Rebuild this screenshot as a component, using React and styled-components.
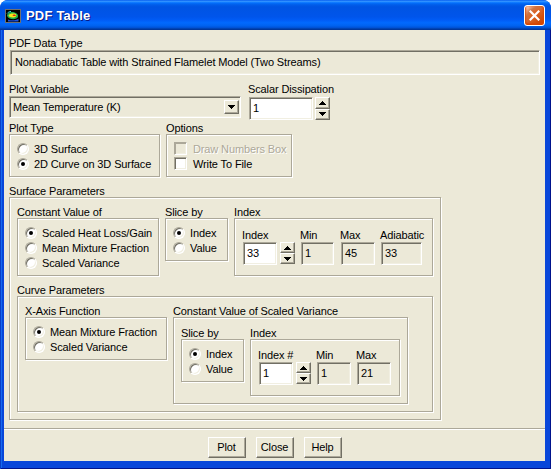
import React from 'react';
import styled, { createGlobalStyle } from 'styled-components';

const FACE = '#ECE9D8';
const SHADOW = '#ACA899';
const DARK = '#716F64';
const LIGHT = '#F1EFE2';

const GlobalStyle = createGlobalStyle`
  html, body { margin: 0; padding: 0; background: #fff; }
  * { box-sizing: border-box; }
`;

const Window = styled.div`
  width: 551px;
  height: 469px;
  display: flex;
  flex-direction: column;
  border-radius: 8px 8px 0 0;
  overflow: hidden;
  background: #0846DA;
  font-family: 'Liberation Sans', Arial, sans-serif;
  font-size: 11px;
  letter-spacing: -0.12px;
  color: #000;
`;

const TitleBar = styled.div`
  flex: none;
  height: 30px;
  display: flex;
  align-items: center;
  padding: 1px 6px 0 5px;
  background: linear-gradient(
    to bottom,
    #0058EE 0%, #3593FF 4%, #288EFF 6%, #127DFF 8%, #036FFC 10%,
    #0262EE 14%, #0057E5 20%, #0054E3 24%, #0055EB 56%, #005BF5 66%,
    #026AFE 76%, #0062EF 86%, #0052D6 92%, #0040AB 96%, #003092 100%
  );
`;

const Title = styled.span`
  flex: 1;
  margin-left: 5px;
  color: #fff;
  font-weight: bold;
  font-size: 13px;
  letter-spacing: 0.2px;
  text-shadow: 1px 1px 0 #0A1883;
`;

const CloseButton = styled.div`
  width: 21px;
  height: 21px;
  border: 1px solid #fff;
  border-radius: 3px;
  background: radial-gradient(circle at 90% 90%, #cc4600 0%, #dc6527 55%, #cd7546 70%, #ffccb2 90%, #fff 100%);
  box-shadow: inset 0 -1px 2px 1px #da4600;
  display: flex;
  align-items: center;
  justify-content: center;
`;

const Frame = styled.div`
  flex: 1;
  display: flex;
  padding: 0 6px 8px 4px;
  background: #0846DA;
  box-shadow: inset 1px 0 0 #0A3FC8, inset -1px -1px 0 #00138C, inset 2px 0 0 #166AEE;
`;

const Client = styled.div`
  flex: 1;
  display: flex;
  flex-direction: column;
  padding: 7px 5px 0 5px;
  background: ${FACE};
`;

const Row = styled.div`
  display: flex;
  align-items: flex-start;
  margin-top: ${p => p.$mt || 0}px;
  margin-left: ${p => p.$ml || 0}px;
`;

const Col = styled.div`
  flex: none;
  display: flex;
  flex-direction: column;
  align-items: flex-start;
  margin-left: ${p => p.$ml || 0}px;
  margin-top: ${p => p.$mt || 0}px;
  width: ${p => (p.$w ? `${p.$w}px` : 'auto')};
`;

const Caption = styled.div`
  height: 12px;
  line-height: 12px;
  white-space: nowrap;
`;

const Etched = styled.div`
  width: ${p => p.$w}px;
  padding: ${p => p.$pad};
  display: flex;
  flex-direction: ${p => (p.$row ? 'row' : 'column')};
  align-items: flex-start;
  border: 1px solid ${SHADOW};
  box-shadow: inset 1px 1px 0 #fff, 1px 1px 0 #fff;
`;

const Field = styled.div`
  flex: none;
  align-self: stretch;
  width: ${p => (p.$w ? `${p.$w}px` : 'auto')};
  height: ${p => p.$h}px;
  margin-left: ${p => p.$ml || 0}px;
  margin-top: ${p => p.$mt || 0}px;
  padding: 0 0 1px ${p => p.$pl ?? 3}px;
  display: flex;
  align-items: center;
  white-space: nowrap;
  overflow: hidden;
  background: ${p => (p.$edit ? '#fff' : FACE)};
  border: 1px solid;
  border-color: ${SHADOW} #fff #fff ${SHADOW};
  box-shadow: inset 1px 1px 0 ${DARK}, inset -1px -1px 0 ${LIGHT};
`;

const Raised = `
  background: ${FACE};
  border: 1px solid;
  border-color: #fff ${DARK} ${DARK} #fff;
  box-shadow: inset -1px -1px 0 ${SHADOW};
  display: flex;
  align-items: center;
  justify-content: center;
`;

const Spinner = styled.div`
  flex: none;
  display: flex;
  flex-direction: column;
  width: 15px;
  height: ${p => p.$h}px;
  margin-left: ${p => p.$ml || 0}px;
`;

const SpinButton = styled.div`
  flex: 1;
  ${Raised}
`;

const Select = styled.div`
  width: 232px;
  height: 22px;
  margin-top: 1px;
  padding: 0 1px 1px 3px;
  display: flex;
  align-items: center;
  background: ${FACE};
  border: 1px solid;
  border-color: ${SHADOW} #fff #fff ${SHADOW};
  box-shadow: inset 1px 1px 0 ${DARK}, inset -1px -1px 0 ${LIGHT};
`;

const SelectText = styled.span`
  flex: 1;
  white-space: nowrap;
`;

const SelectButton = styled.div`
  width: 15px;
  height: 14px;
  ${Raised}
`;

const Option = styled.div`
  display: flex;
  align-items: center;
  height: 15px;
  white-space: nowrap;
  color: ${p => (p.$disabled ? SHADOW : '#000')};
  text-shadow: ${p => (p.$disabled ? '1px 1px 0 #fff' : 'none')};
`;

const RadioMark = styled.span`
  position: relative;
  flex: none;
  width: 12px;
  height: 12px;
  margin-right: 5px;
  border-radius: 50%;
  background: #fff;
  border: 1px solid;
  border-color: ${SHADOW} #fff #fff ${SHADOW};
  box-shadow: inset 1px 1px 0 ${DARK}, inset -1px -1px 0 ${LIGHT};

  &::after {
    content: '';
    display: ${p => (p.$on ? 'block' : 'none')};
    position: absolute;
    left: 3px;
    top: 3px;
    width: 4px;
    height: 4px;
    border-radius: 50%;
    background: #000;
  }
`;

const CheckMark = styled.span`
  flex: none;
  width: 13px;
  height: 13px;
  margin-right: 6px;
  background: ${p => (p.$disabled ? FACE : '#fff')};
  border: 1px solid;
  border-color: ${SHADOW} #fff #fff ${SHADOW};
  box-shadow: inset 1px 1px 0 ${p => (p.$disabled ? SHADOW : DARK)}, inset -1px -1px 0 ${LIGHT};
`;

const Separator = styled.div`
  margin: 8px -5px 0;
  border-top: 1px solid ${SHADOW};
  border-bottom: 1px solid #fff;
`;

const ButtonBar = styled.div`
  display: flex;
  justify-content: center;
  gap: 10px;
  margin-top: 7px;
`;

const PushButton = styled.div`
  width: 38px;
  height: 21px;
  padding-bottom: 1px;
  ${Raised}
`;

const UpArrow = () => (
  <svg width="7" height="4" viewBox="0 0 7 4">
    <path d="M3 0h1v1h1v1h1v1h1v1H0V3h1V2h1V1h1z" fill="#000" />
  </svg>
);

const DownArrow = () => (
  <svg width="7" height="4" viewBox="0 0 7 4">
    <path d="M0 0h7v1H6v1H5v1H4v1H3V3H2V2H1V1H0z" fill="#000" />
  </svg>
);

const AppIcon = () => (
  <svg width="16" height="16" viewBox="0 0 16 16">
    <rect x="0.5" y="1.5" width="15" height="13" fill="#000" stroke="#707070" />
    <path d="M2 8C2 4.5 6 3.5 9 4.2C12.5 5 14 7.5 12.5 9.8C10.5 12 4 11.8 2 8Z" fill="#22B14C" />
    <path d="M3.5 7.5C4.5 5.5 8.5 5 10.8 6C12 6.8 11.5 8.8 9.5 9.2C7 9.8 3.8 9.2 3.5 7.5Z" fill="#F5E51B" />
    <path d="M7.5 7.2C8.3 6.2 10.3 6.3 10.8 7.2C11 8.2 8.8 8.6 7.5 7.2Z" fill="#E2231A" />
    <path d="M3 11.5C6 12.8 10.5 12.6 13.5 10.8V13.5H3Z" fill="#1A4FE0" />
    <path d="M2 5.5C3 4.2 4.5 3.6 6 3.4" stroke="#2BD6E8" strokeWidth="1" fill="none" />
  </svg>
);

const CloseGlyph = () => (
  <svg width="11" height="11" viewBox="0 0 11 11">
    <path d="M1.5 1.5L9.5 9.5M9.5 1.5L1.5 9.5" stroke="#fff" strokeWidth="2.2" strokeLinecap="square" />
  </svg>
);

const Group = ({ label, ml, mt, w, pad, row, children }) => (
  <Col $ml={ml} $mt={mt}>
    <Caption>{label}</Caption>
    <Etched $w={w} $pad={pad} $row={row}>
      {children}
    </Etched>
  </Col>
);

const Radio = ({ on, children }) => (
  <Option>
    <RadioMark $on={on} />
    {children}
  </Option>
);

const Check = ({ disabled, children }) => (
  <Option $disabled={disabled}>
    <CheckMark $disabled={disabled} />
    {children}
  </Option>
);

const Spin = ({ h, ml }) => (
  <Spinner $h={h} $ml={ml}>
    <SpinButton><UpArrow /></SpinButton>
    <SpinButton><DownArrow /></SpinButton>
  </Spinner>
);

const ReadOut = ({ label, ml, w, value }) => (
  <Col $ml={ml}>
    <Caption>{label}</Caption>
    <Field $mt={1} $ml={1} $w={w} $h={23}>{value}</Field>
  </Col>
);

const IndexInput = ({ label, value, w }) => (
  <Col>
    <Caption>{label}</Caption>
    <Row $mt={1} $ml={1}>
      <Field $edit $w={w} $h={23}>{value}</Field>
      <Spin h={22} ml={3} />
    </Row>
  </Col>
);

const OPTION_PAD = '6px 7px 5px 7px';

export default function App() {
  return (
    <>
      <GlobalStyle />
      <Window>
        <TitleBar>
          <AppIcon />
          <Title>PDF Table</Title>
          <CloseButton><CloseGlyph /></CloseButton>
        </TitleBar>

        <Frame>
          <Client>
            <Caption>PDF Data Type</Caption>
            <Field $mt={1} $ml={1} $h={25} $pl={4}>
              Nonadiabatic Table with Strained Flamelet Model (Two Streams)
            </Field>

            <Row $mt={8}>
              <Col $w={232}>
                <Caption>Plot Variable</Caption>
                <Select>
                  <SelectText>Mean Temperature (K)</SelectText>
                  <SelectButton><DownArrow /></SelectButton>
                </Select>
              </Col>
              <Col $ml={7}>
                <Caption>Scalar Dissipation</Caption>
                <Row $mt={2} $ml={1}>
                  <Field $edit $w={64} $h={23}>1</Field>
                  <Spin h={23} ml={2} />
                </Row>
              </Col>
            </Row>

            <Row $mt={2}>
              <Group label="Plot Type" w={151} pad={OPTION_PAD}>
                <Radio>3D Surface</Radio>
                <Radio on>2D Curve on 3D Surface</Radio>
              </Group>
              <Group label="Options" ml={6} w={126} pad={OPTION_PAD}>
                <Check disabled>Draw Numbers Box</Check>
                <Check>Write To File</Check>
              </Group>
            </Row>

            <Row $mt={8}>
              <Group label="Surface Parameters" w={432} pad="8px 7px 7px 7px">
                <Row>
                  <Group label="Constant Value of" w={142} pad={OPTION_PAD}>
                    <Radio on>Scaled Heat Loss/Gain</Radio>
                    <Radio>Mean Mixture Fraction</Radio>
                    <Radio>Scaled Variance</Radio>
                  </Group>
                  <Group label="Slice by" ml={6} w={63} pad={OPTION_PAD}>
                    <Radio on>Index</Radio>
                    <Radio>Value</Radio>
                  </Group>
                  <Group label="Index" ml={6} w={199} pad="10px 7px 10px 7px" row>
                    <IndexInput label="Index" value="33" w={34} />
                    <ReadOut label="Min" ml={5} w={33} value="1" />
                    <ReadOut label="Max" ml={6} w={34} value="45" />
                    <ReadOut label="Adiabatic" ml={5} w={41} value="33" />
                  </Group>
                </Row>

                <Group label="Curve Parameters" mt={8} w={416} pad="8px 7px 7px 7px" row>
                  <Group label="X-Axis Function" w={142} pad={OPTION_PAD}>
                    <Radio on>Mean Mixture Fraction</Radio>
                    <Radio>Scaled Variance</Radio>
                  </Group>
                  <Group label="Constant Value of Scaled Variance" ml={6} w={235} pad="9px 7px 7px 7px" row>
                    <Group label="Slice by" w={63} pad={OPTION_PAD}>
                      <Radio on>Index</Radio>
                      <Radio>Value</Radio>
                    </Group>
                    <Group label="Index" ml={6} w={150} pad="9px 7px 10px 7px" row>
                      <IndexInput label="Index #" value="1" w={34} />
                      <ReadOut label="Min" ml={5} w={34} value="1" />
                      <ReadOut label="Max" ml={5} w={34} value="21" />
                    </Group>
                  </Group>
                </Group>
              </Group>
            </Row>

            <Separator />

            <ButtonBar>
              <PushButton>Plot</PushButton>
              <PushButton>Close</PushButton>
              <PushButton>Help</PushButton>
            </ButtonBar>
          </Client>
        </Frame>
      </Window>
    </>
  );
}
